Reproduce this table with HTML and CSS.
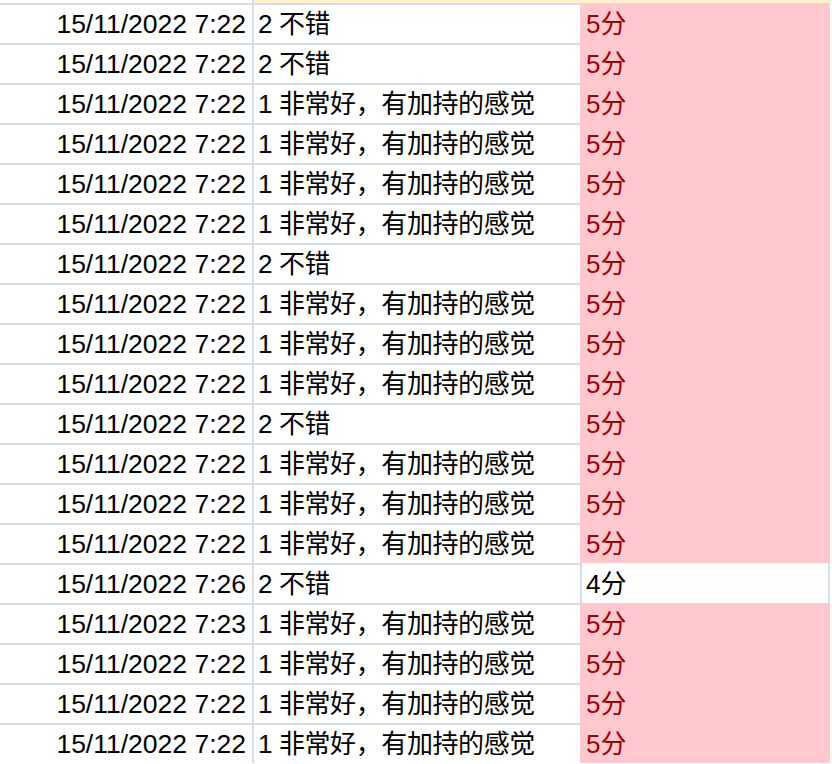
FILE: index.html
```html
<!DOCTYPE html>
<html>
<head>
<meta charset="utf-8">
<link rel="stylesheet" href="styles.css">
</head>
<body>
<div class="sheet">
  <div class="row strip">
    <div class="c1"></div>
    <div class="c2 yellow"></div>
    <div class="c3 yellow"></div>
  </div>
  <div class="row"><div class="c1">15/11/2022 7:22</div><div class="c2">2 不错</div><div class="c3 bad">5分</div></div>
  <div class="row"><div class="c1">15/11/2022 7:22</div><div class="c2">2 不错</div><div class="c3 bad">5分</div></div>
  <div class="row"><div class="c1">15/11/2022 7:22</div><div class="c2">1 非常好，有加持的感觉</div><div class="c3 bad">5分</div></div>
  <div class="row"><div class="c1">15/11/2022 7:22</div><div class="c2">1 非常好，有加持的感觉</div><div class="c3 bad">5分</div></div>
  <div class="row"><div class="c1">15/11/2022 7:22</div><div class="c2">1 非常好，有加持的感觉</div><div class="c3 bad">5分</div></div>
  <div class="row"><div class="c1">15/11/2022 7:22</div><div class="c2">1 非常好，有加持的感觉</div><div class="c3 bad">5分</div></div>
  <div class="row"><div class="c1">15/11/2022 7:22</div><div class="c2">2 不错</div><div class="c3 bad">5分</div></div>
  <div class="row"><div class="c1">15/11/2022 7:22</div><div class="c2">1 非常好，有加持的感觉</div><div class="c3 bad">5分</div></div>
  <div class="row"><div class="c1">15/11/2022 7:22</div><div class="c2">1 非常好，有加持的感觉</div><div class="c3 bad">5分</div></div>
  <div class="row"><div class="c1">15/11/2022 7:22</div><div class="c2">1 非常好，有加持的感觉</div><div class="c3 bad">5分</div></div>
  <div class="row"><div class="c1">15/11/2022 7:22</div><div class="c2">2 不错</div><div class="c3 bad">5分</div></div>
  <div class="row"><div class="c1">15/11/2022 7:22</div><div class="c2">1 非常好，有加持的感觉</div><div class="c3 bad">5分</div></div>
  <div class="row"><div class="c1">15/11/2022 7:22</div><div class="c2">1 非常好，有加持的感觉</div><div class="c3 bad">5分</div></div>
  <div class="row"><div class="c1">15/11/2022 7:22</div><div class="c2">1 非常好，有加持的感觉</div><div class="c3 bad">5分</div></div>
  <div class="row"><div class="c1">15/11/2022 7:26</div><div class="c2">2 不错</div><div class="c3 plain">4分</div></div>
  <div class="row"><div class="c1">15/11/2022 7:23</div><div class="c2">1 非常好，有加持的感觉</div><div class="c3 bad">5分</div></div>
  <div class="row"><div class="c1">15/11/2022 7:22</div><div class="c2">1 非常好，有加持的感觉</div><div class="c3 bad">5分</div></div>
  <div class="row"><div class="c1">15/11/2022 7:22</div><div class="c2">1 非常好，有加持的感觉</div><div class="c3 bad">5分</div></div>
  <div class="row"><div class="c1">15/11/2022 7:22</div><div class="c2">1 非常好，有加持的感觉</div><div class="c3 bad">5分</div></div>
</div>
</body>
</html>
```

FILE: styles.css
```css
html, body {
  margin: 0;
  padding: 0;
  background: #ffffff;
}

body {
  font-family: "Liberation Sans", "Noto Sans CJK SC", sans-serif;
  font-size: 26px;
  color: #000000;
  overflow: hidden;
}

.sheet {
  display: flex;
  flex-direction: column;
  width: 832px;
}

.row {
  display: flex;
  height: 40px;
  flex: none;
}

.row > div {
  box-sizing: border-box;
  white-space: nowrap;
  line-height: 38px;
  flex: none;
}

.c1 {
  width: 254px;
  border-top: 2px solid #d5dce8;
  border-right: 2px solid #d5dce8;
  text-align: right;
  padding-right: 6px;
  font-size: 26.5px;
}

.c2 {
  width: 326px;
  border-top: 2px solid #d5dce8;
  padding-left: 4px;
  letter-spacing: -0.4px;
}

.c3 {
  width: 250px;
  padding-left: 6px;
  padding-top: 2px;
}

.bad {
  background: #ffc7ce;
  color: #9c0006;
}

.plain {
  background: #ffffff;
  border-left: 2px solid #d5dce8;
  border-right: 2px solid #d5dce8;
  padding-left: 4px;
}

.row.strip {
  height: 3px;
}

.row.strip .c1 {
  border-top: none;
}

.row.strip .c2 {
  border-top: none;
}

.row.strip .c3 {
  padding-top: 0;
}

.yellow {
  background: #fff2cc;
}
```
